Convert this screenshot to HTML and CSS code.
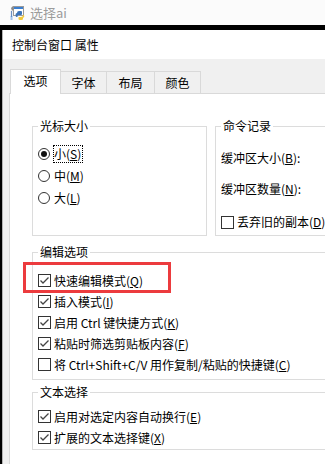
FILE: index.html
```html
<!DOCTYPE html>
<html lang="zh-CN">
<head>
    <meta charset="UTF-8">
    <meta name="viewport" content="width=device-width, initial-scale=1.0">
    <title>控制台窗口 属性</title>
    <link rel="stylesheet" href="styles.css">
</head>
<body>

<div class="topbar">
    <svg class="app-icon" width="16" height="16" viewBox="0 0 16 16">
        <rect x="4.5" y="1.5" width="10" height="9" fill="#fff" stroke="#9a9a9a"/>
        <rect x="5" y="2" width="9" height="2" fill="#3b7fd0"/>
        <path d="M2 3 L4 1 L5 4 L3 6 Z" fill="#8a8a8a"/>
        <path d="M2.5 6 L2.5 12" stroke="#6a8fc0" stroke-width="1.2"/>
        <path d="M1.5 12 L3.5 12 M1.5 14 L3.5 14" stroke="#4a8ad8" stroke-width="1"/>
        <path d="M8 8 Q8 6 10 6 L12 6 Q13 6 13 7 L13 9 Q13 10 12 10 L9.5 10 Q8.5 10 8.5 11 L8.5 12 L7.5 12 Q6.5 12 6.5 10 Q6.5 8 8 8 Z" fill="#3c74b8"/>
        <path d="M14 10 Q14 12 12 12 L10 12 Q9.5 12 9.5 12.5 L9.5 14 Q9.5 15 11 15 L12.5 15 Q14 15 14 14 L14 12.5 L15 12.5 Q15.5 11 15 10 Z" fill="#f2c93b"/>
    </svg>
    <span class="app-name">选择ai</span>
</div>

<div class="window">
    <div class="titlebar">控制台窗口 属性</div>

    <div class="tabs">
        <div class="tab active">选项</div>
        <div class="tab w47">字体</div>
        <div class="tab w49">布局</div>
        <div class="tab w47">颜色</div>
    </div>

    <div class="panel">
        <div class="top-row">
            <fieldset class="group cursor">
                <legend>光标大小</legend>
                <div class="item">
                    <span class="radio checked"></span>
                    <span class="focus">小(<u>S</u>)</span>
                </div>
                <div class="item">
                    <span class="radio"></span>
                    <span>中(<u>M</u>)</span>
                </div>
                <div class="item">
                    <span class="radio"></span>
                    <span>大(<u>L</u>)</span>
                </div>
            </fieldset>

            <fieldset class="group history">
                <legend>命令记录</legend>
                <div class="item first">缓冲区大小(<u>B</u>):</div>
                <div class="item second">缓冲区数量(<u>N</u>):</div>
                <div class="item third">
                    <span class="check"></span>
                    <span>丢弃旧的副本(<u>D</u>)</span>
                </div>
            </fieldset>
        </div>

        <fieldset class="group edit">
            <legend>编辑选项</legend>
            <div class="item row marked">
                <span class="check on"><svg width="11" height="11" viewBox="0 0 11 11"><polyline points="1.5,5.5 4,8 9.5,2.5" fill="none" stroke="#444" stroke-width="1.3"/></svg></span>
                <span>快速编辑模式(<u>Q</u>)</span>
                <span class="highlight"></span>
            </div>
            <div class="item row">
                <span class="check on"><svg width="11" height="11" viewBox="0 0 11 11"><polyline points="1.5,5.5 4,8 9.5,2.5" fill="none" stroke="#444" stroke-width="1.3"/></svg></span>
                <span>插入模式(<u>I</u>)</span>
            </div>
            <div class="item row">
                <span class="check on"><svg width="11" height="11" viewBox="0 0 11 11"><polyline points="1.5,5.5 4,8 9.5,2.5" fill="none" stroke="#444" stroke-width="1.3"/></svg></span>
                <span>启用 Ctrl 键快捷方式(<u>K</u>)</span>
            </div>
            <div class="item row">
                <span class="check on"><svg width="11" height="11" viewBox="0 0 11 11"><polyline points="1.5,5.5 4,8 9.5,2.5" fill="none" stroke="#444" stroke-width="1.3"/></svg></span>
                <span>粘贴时筛选剪贴板内容(<u>F</u>)</span>
            </div>
            <div class="item row">
                <span class="check"></span>
                <span>将 Ctrl+Shift+C/V 用作复制/粘贴的快捷键(<u>C</u>)</span>
            </div>
        </fieldset>

        <fieldset class="group select">
            <legend>文本选择</legend>
            <div class="item row">
                <span class="check on"><svg width="11" height="11" viewBox="0 0 11 11"><polyline points="1.5,5.5 4,8 9.5,2.5" fill="none" stroke="#444" stroke-width="1.3"/></svg></span>
                <span>启用对选定内容自动换行(<u>E</u>)</span>
            </div>
            <div class="item row">
                <span class="check on"><svg width="11" height="11" viewBox="0 0 11 11"><polyline points="1.5,5.5 4,8 9.5,2.5" fill="none" stroke="#444" stroke-width="1.3"/></svg></span>
                <span>扩展的文本选择键(<u>X</u>)</span>
            </div>
        </fieldset>
    </div>
</div>

</body>
</html>
```

FILE: styles.css
```css
* {
    box-sizing: border-box;
}
body {
    margin: 0;
    width: 325px;
    height: 464px;
    overflow: hidden;
    background: #fff;
    font-family: "Noto Sans CJK SC", "Noto Sans", sans-serif;
    font-size: 12px;
    line-height: 16px;
    color: #000;
}
u {
    text-underline-offset: 1px;
}

/* app strip above the dialog */
.topbar {
    height: 25px;
    display: flex;
    align-items: center;
    padding-left: 9px;
    background: #fbfbfb;
}
.app-icon {
    margin-right: 5px;
}
.app-name {
    color: #9c9c9c;
    font-size: 13px;
}

/* dialog */
.window {
    height: 439px;
    border-top: 5px solid #000;
    border-left: 2px solid #000;
    background: #f0f0f0;
    box-shadow: inset 1px 0 0 #b4b4b4;
    overflow: hidden;
}
.titlebar {
    height: 29px;
    background: #fff;
    padding-left: 9px;
    line-height: 29px;
    margin-left: 1px;
}
.tabs {
    display: flex;
    align-items: flex-end;
    padding: 10px 0 0 8px;
}
.tab {
    height: 22px;
    line-height: 21px;
    text-align: center;
    border: 1px solid #d9d9d9;
    border-bottom: none;
    margin-left: -1px;
    background: #f0f0f0;
}
.tab.active {
    width: 51px;
    height: 25px;
    margin-left: 0;
    margin-bottom: -1px;
    line-height: 22px;
    background: #fff;
    position: relative;
    z-index: 1;
}
.w47 {
    width: 47px;
}
.w49 {
    width: 49px;
}
.panel {
    background: #fff;
    border-top: 1px solid #d9d9d9;
    border-left: 1px solid #d9d9d9;
    margin-left: 7px;
    height: 371px;
    padding: 24px 0 0 22px;
    overflow: hidden;
}

/* group boxes */
.top-row {
    display: flex;
    gap: 8px;
}
.group {
    margin: 0;
    padding: 0 0 0 5px;
    border: 1px solid #dcdcdc;
    min-width: 0;
    flex: none;
}
.group legend {
    padding: 0 2px;
    margin-left: 0;
    line-height: 16px;
}
.cursor {
    width: 175px;
    height: 118px;
    padding-top: 9px;
}
.history {
    width: 140px;
    height: 118px;
}
.edit {
    width: 320px;
    margin-top: 8px;
    padding-top: 10px;
    padding-bottom: 4px;
}
.select {
    width: 320px;
    margin-top: 4px;
    padding-top: 6px;
    padding-bottom: 1px;
}

/* rows */
.item {
    display: flex;
    align-items: center;
    height: 22px;
    white-space: nowrap;
}
.item.row {
    height: 21px;
}
.history .first {
    margin-top: 13px;
}
.history .second {
    margin-top: 9px;
}
.history .third {
    margin-top: 11px;
}
.radio {
    width: 12px;
    height: 12px;
    border: 1px solid #333;
    border-radius: 50%;
    margin-right: 4px;
    display: flex;
    align-items: center;
    justify-content: center;
}
.radio.checked::after {
    content: "";
    width: 6px;
    height: 6px;
    border-radius: 50%;
    background: #111;
}
.focus {
    border: 1px dotted #000;
    margin-left: -1px;
    padding: 0 1px 0 0;
    line-height: 16px;
}
.check {
    width: 13px;
    height: 13px;
    border: 1px solid #333;
    margin-right: 3px;
    display: flex;
    align-items: center;
    justify-content: center;
    flex: none;
}
.marked {
    position: relative;
}
.highlight {
    position: absolute;
    left: -15px;
    top: -8px;
    width: 148px;
    height: 31px;
    border: 3px solid #ec3b3e;
}
```
